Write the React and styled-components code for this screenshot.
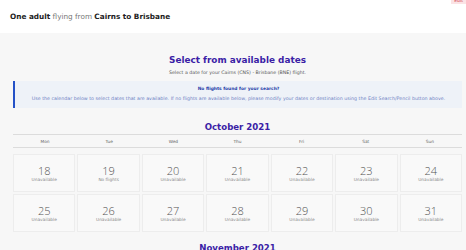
import React from 'react'
import styled, { createGlobalStyle } from 'styled-components'

const GlobalStyle = createGlobalStyle`
  html, body {
    margin: 0;
    padding: 0;
    background: #f7f7f7;
    font-family: "DejaVu Sans", "Open Sans", sans-serif;
  }
`

const weeks = [
  [
    { day: 18, note: 'Unavailable' },
    { day: 19, note: 'No flights' },
    { day: 20, note: 'Unavailable' },
    { day: 21, note: 'Unavailable' },
    { day: 22, note: 'Unavailable' },
    { day: 23, note: 'Unavailable' },
    { day: 24, note: 'Unavailable' },
  ],
  [
    { day: 25, note: 'Unavailable' },
    { day: 26, note: 'Unavailable' },
    { day: 27, note: 'Unavailable' },
    { day: 28, note: 'Unavailable' },
    { day: 29, note: 'Unavailable' },
    { day: 30, note: 'Unavailable' },
    { day: 31, note: 'Unavailable' },
  ],
]

const dayNames = ['Mon', 'Tue', 'Wed', 'Thu', 'Fri', 'Sat', 'Sun']

export default function App() {
  return (
    <Page>
      <GlobalStyle />
      <Header>
        <Trip>
          <b>One adult</b> flying from <b>Cairns to Brisbane</b>
        </Trip>
        <EditBadge>Edit</EditBadge>
      </Header>

      <Main>
        <Title>Select from available dates</Title>
        <Sub>Select a date for your Cairns (CNS) - Brisbane (BNE) flight.</Sub>

        <Notice>
          <h4>No flights found for your search?</h4>
          <p>
            Use the calendar below to select dates that are available. If no flights are available
            below, please modify your dates or destination using the Edit Search/Pencil button above.
          </p>
        </Notice>

        <Month>October 2021</Month>
        <WeekHead>
          {dayNames.map((d) => (
            <span key={d}>{d}</span>
          ))}
        </WeekHead>
        <Grid>
          {weeks.flat().map((c) => (
            <Cell key={c.day}>
              <strong>{c.day}</strong>
              <small>{c.note}</small>
            </Cell>
          ))}
        </Grid>

        <Month $next>November 2021</Month>
      </Main>
    </Page>
  )
}

const Page = styled.div`
  width: 466px;
  height: 250px;
  overflow: hidden;
`

const Header = styled.header`
  position: relative;
  height: 33px;
  background: #fff;
  display: flex;
  align-items: center;
  padding: 0 0 1px 10px;
  box-sizing: border-box;
`

const Trip = styled.div`
  font-size: 7.3px;
  color: #777;
  b {
    color: #222;
    font-weight: 700;
  }
`

const EditBadge = styled.span`
  position: absolute;
  top: -2px;
  right: 0;
  font-size: 4.5px;
  line-height: 6px;
  color: #d04050;
  background: #fbe3e5;
  padding: 0 3px;
`

const Main = styled.main`
  padding: 20px 4px 0 13px;
  display: flex;
  flex-direction: column;
  align-items: stretch;
`

const Title = styled.h2`
  margin: 0;
  text-align: center;
  font-size: 8.9px;
  font-weight: 700;
  color: #3b1ea6;
  line-height: 14px;
`

const Sub = styled.p`
  margin: 3px 0 0;
  text-align: center;
  font-size: 4.7px;
  line-height: 6px;
  color: #555;
`

const Notice = styled.div`
  margin-top: 5px;
  height: 27px;
  box-sizing: border-box;
  background: #eef2f8;
  border-left: 2px solid #2451c7;
  padding-top: 5px;
  text-align: center;
  h4 {
    margin: 0;
    font-size: 4.4px;
    line-height: 6px;
    font-weight: 700;
    color: #1f3ea8;
  }
  p {
    margin: 4px 0 0;
    font-size: 4.75px;
    line-height: 6px;
    color: #6f83c4;
  }
`

const Month = styled.h3`
  margin: ${(p) => (p.$next ? '10px 0 0' : '13px 0 0')};
  text-align: center;
  font-size: 8.6px;
  font-weight: 700;
  color: #3b1ea6;
  line-height: 12px;
`

const WeekHead = styled.div`
  margin-top: 1px;
  height: 14px;
  box-sizing: border-box;
  border-top: 1px solid #dcdcdc;
  border-bottom: 1px solid #dcdcdc;
  display: grid;
  grid-template-columns: repeat(7, 1fr);
  align-items: center;
  span {
    text-align: center;
    font-size: 4.3px;
    color: #666;
  }
`

const Grid = styled.div`
  margin-top: 6px;
  display: grid;
  grid-template-columns: repeat(7, 1fr);
  grid-auto-rows: 38px;
  gap: 2px;
`

const Cell = styled.div`
  background: #f9f9f9;
  border: 1px solid #ededed;
  display: flex;
  flex-direction: column;
  align-items: center;
  justify-content: center;
  padding-top: 1px;
  strong {
    font-family: "Open Sans", "DejaVu Sans", sans-serif;
    font-size: 11px;
    font-weight: 300;
    color: #555;
    line-height: 13px;
  }
  small {
    margin-top: 0;
    font-size: 4.3px;
    line-height: 6px;
    color: #888;
  }
`
